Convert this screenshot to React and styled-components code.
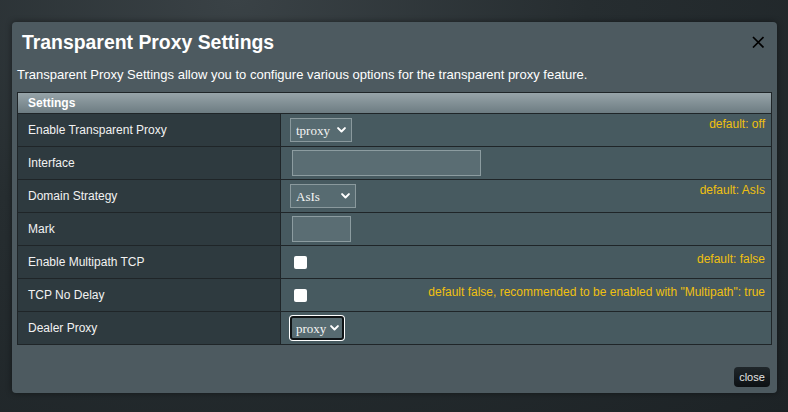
import React from "react";
import styled, { createGlobalStyle } from "styled-components";

const GlobalStyle = createGlobalStyle`
  html, body {
    margin: 0;
    padding: 0;
  }
  body {
    width: 788px;
    height: 412px;
    overflow: hidden;
    font-family: "Liberation Sans", Arial, sans-serif;
    background: radial-gradient(ellipse at 30% 0%, #3a4246 0%, #262d30 45%, #1d2326 100%);
  }
`;

const Backdrop = styled.div`
  box-sizing: border-box;
  width: 788px;
  height: 412px;
  padding: 22px 11px 0 12px;
`;

const Modal = styled.div`
  box-sizing: border-box;
  width: 765px;
  height: 371px;
  background: #4d5a60;
  border-radius: 4px;
  box-shadow: 0 0 6px rgb(0 0 0 / 45%);
  display: flex;
  flex-direction: column;
  padding: 0 5px 6px 5px;
`;

const TitleBar = styled.div`
  display: flex;
  align-items: center;
  justify-content: space-between;
  height: 40px;
  padding: 0 8px 0 5px;
`;

const Title = styled.h1`
  margin: 0;
  font-size: 19.4px;
  font-weight: 700;
  color: #ffffff;
`;

const CloseX = styled.button`
  border: 0;
  padding: 0;
  background: none;
  width: 12px;
  height: 12px;
  display: flex;
  cursor: pointer;
`;

const Description = styled.p`
  margin: 5px 0 0 0;
  font-size: 13px;
  line-height: 15px;
  color: #ffffff;
`;

const Table = styled.div`
  margin-top: 10px;
  border: 1px solid #1f2528;
  display: grid;
  grid-template-columns: 263px 1fr;
`;

const HeaderRow = styled.div`
  grid-column: 1 / -1;
  height: 20px;
  display: flex;
  align-items: center;
  padding-left: 10px;
  border-bottom: 1px solid #1f2528;
  background: linear-gradient(to bottom, #97a4a9 0%, #6d7c82 100%);
  font-size: 12px;
  font-weight: 700;
  color: #ffffff;
`;

const LabelCell = styled.div`
  height: 32px;
  display: flex;
  align-items: center;
  padding-left: 10px;
  background: #2e3a3f;
  border-right: 1px solid #1f2528;
  border-bottom: ${(p) => (p.$last ? "none" : "1px solid #1f2528")};
  font-size: 12px;
  color: #f2f2f2;
`;

const ValueCell = styled.div`
  height: 32px;
  display: flex;
  align-items: center;
  padding: 0 6px 0 9px;
  background: #475a60;
  border-bottom: ${(p) => (p.$last ? "none" : "1px solid #1f2528")};
`;

const Hint = styled.span`
  margin-left: auto;
  align-self: flex-start;
  padding-top: ${(p) => p.$top}px;
  font-size: 12px;
  line-height: 14px;
  color: #f0c010;
  white-space: nowrap;
`;

const chevron =
  "url(\"data:image/svg+xml;utf8,<svg xmlns='http://www.w3.org/2000/svg' width='9' height='6' viewBox='0 0 9 6'><path d='M1.1 1.1 L4.5 4.5 L7.9 1.1' fill='none' stroke='white' stroke-width='2' stroke-linecap='round' stroke-linejoin='round'/></svg>\")";

const Select = styled.select`
  appearance: none;
  box-sizing: border-box;
  width: ${(p) => p.$w}px;
  height: 24px;
  padding: 0 0 0 5px;
  font-family: "Liberation Serif", "Times New Roman", serif;
  font-size: 13px;
  color: #f4f4f4;
  background: #576b71 ${chevron} no-repeat right 5px center;
  border: 1px solid #8a999d;
  border-radius: 0;
  outline: none;
  ${(p) =>
    p.$focused &&
    `
    border: 2px solid #0f1315;
    border-radius: 3px;
    padding-left: 4px;
    background-position: right 3px center;
    box-shadow: 0 0 0 1px #ffffff;
  `}
`;

const TextInput = styled.input`
  box-sizing: border-box;
  width: ${(p) => p.$w}px;
  height: 26px;
  margin-left: 2px;
  padding: 0 4px;
  background: #5a6d73;
  border: 1px solid #8c9ca0;
  color: #ffffff;
  font-size: 13px;
  outline: none;
`;

const Check = styled.input`
  appearance: none;
  width: 13px;
  height: 13px;
  margin: 0 0 0 4px;
  background: #ffffff;
  border-radius: 2px;
  border: 0;
`;

const Footer = styled.div`
  margin-top: auto;
  display: flex;
  justify-content: flex-end;
  padding-right: 2px;
`;

const CloseButton = styled.button`
  width: 36px;
  height: 20px;
  padding: 0;
  border: 0;
  border-radius: 4px;
  background: linear-gradient(to bottom, #20272b 0%, #0c1013 100%);
  color: #e4e4e4;
  font-family: "Liberation Sans", Arial, sans-serif;
  font-size: 11px;
  cursor: pointer;
`;

const rows = [
  {
    label: "Enable Transparent Proxy",
    control: (
      <Select $w={62} defaultValue="tproxy">
        <option value="tproxy">tproxy</option>
        <option value="off">off</option>
      </Select>
    ),
    hint: "default: off",
    hintTop: 3,
  },
  { label: "Interface", control: <TextInput $w={189} /> },
  {
    label: "Domain Strategy",
    control: (
      <Select $w={66} defaultValue="AsIs">
        <option value="AsIs">AsIs</option>
      </Select>
    ),
    hint: "default: AsIs",
    hintTop: 3,
  },
  { label: "Mark", control: <TextInput $w={59} /> },
  {
    label: "Enable Multipath TCP",
    control: <Check type="checkbox" />,
    hint: "default: false",
    hintTop: 6,
  },
  {
    label: "TCP No Delay",
    control: <Check type="checkbox" />,
    hint: 'default false, recommended to be enabled with "Multipath": true',
    hintTop: 6,
  },
  {
    label: "Dealer Proxy",
    control: (
      <Select $w={54} $focused defaultValue="proxy">
        <option value="proxy">proxy</option>
      </Select>
    ),
  },
];

const App = () => {
  return (
    <Backdrop>
      <GlobalStyle />
      <Modal>
        <TitleBar>
          <Title>Transparent Proxy Settings</Title>
          <CloseX aria-label="close">
            <svg width="12" height="12" viewBox="0 0 12 12">
              <path
                d="M1 1 L11.5 11.5 M11.5 1 L1 11.5"
                stroke="#000"
                strokeWidth="1.7"
                fill="none"
              />
            </svg>
          </CloseX>
        </TitleBar>
        <Description>
          Transparent Proxy Settings allow you to configure various options for
          the transparent proxy feature.
        </Description>
        <Table>
          <HeaderRow>Settings</HeaderRow>
          {rows.map((r, i) => (
            <React.Fragment key={r.label}>
              <LabelCell $last={i === rows.length - 1}>{r.label}</LabelCell>
              <ValueCell $last={i === rows.length - 1}>
                {r.control}
                {r.hint && <Hint $top={r.hintTop}>{r.hint}</Hint>}
              </ValueCell>
            </React.Fragment>
          ))}
        </Table>
        <Footer>
          <CloseButton>close</CloseButton>
        </Footer>
      </Modal>
    </Backdrop>
  );
};

export default App;
